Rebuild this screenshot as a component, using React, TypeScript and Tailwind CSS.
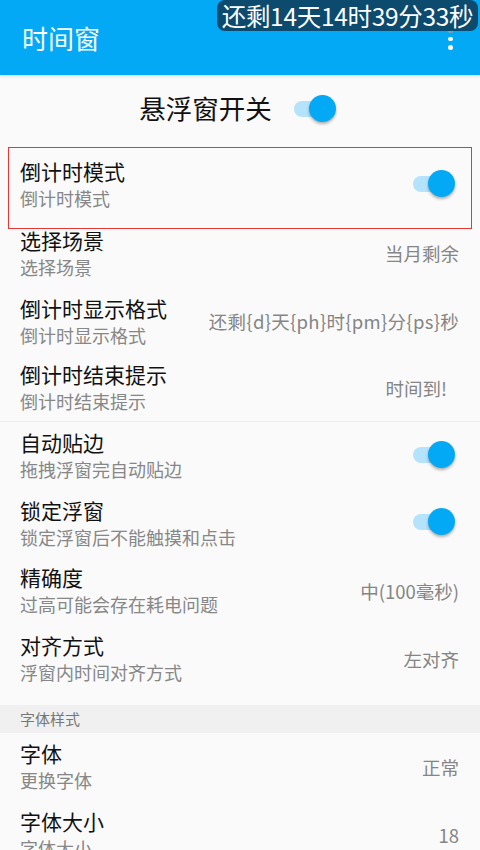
import React from "react";

const FONT = { fontFamily: '"Noto Sans CJK SC", "Noto Sans", sans-serif' };

function Switch({ className = "" }: { className?: string }) {
  return (
    <div className={`relative w-[42px] h-[27px] shrink-0 ${className}`}>
      <div className="absolute left-0 top-[6px] w-[38px] h-[16px] rounded-full bg-[#b5e3fb]" />
      <div className="absolute right-0 top-0 w-[27px] h-[27px] rounded-full bg-[#03a9f4] shadow-[0_2px_3px_rgba(0,0,0,0.3)]" />
    </div>
  );
}

function Row({
  title,
  sub,
  value,
  sw,
  h,
  valueClass = "",
  children,
}: {
  title: string;
  sub: string;
  value?: string;
  sw?: boolean;
  h: string;
  valueClass?: string;
  children?: React.ReactNode;
}) {
  return (
    <div className={`relative flex items-center ${h} pl-[20px] ${sw ? "pr-[25px]" : "pr-[21px]"}`}>
      <div className="flex flex-col flex-1 min-w-0">
        <div className="text-[21px] leading-[27px] text-[#111111] whitespace-nowrap">{title}</div>
        <div className="text-[18px] leading-[27px] text-[#878787] whitespace-nowrap">{sub}</div>
      </div>
      {value !== undefined && (
        <div className={`text-[18.5px] leading-[27px] text-[#858585] whitespace-nowrap ${valueClass}`}>{value}</div>
      )}
      {sw && <Switch className="top-[-2px]" />}
      {children}
    </div>
  );
}

export default function App() {
  return (
    <div className="relative w-[480px] h-[850px] overflow-hidden bg-[#fafafa]" style={FONT}>
      {/* App bar */}
      <div className="relative h-[75px] bg-[#03a9f4] flex items-center pl-[22px] shadow-[0_1px_3px_rgba(0,0,0,0.15)]">
        <div className="text-white text-[26px] leading-[34px]">时间窗</div>
        <div className="absolute left-[448px] top-[28px] flex flex-col gap-[4px]">
          <div className="w-[4.5px] h-[4.5px] rounded-full bg-[#9a9a9a]" />
          <div className="w-[4.5px] h-[4.5px] rounded-full bg-white" />
          <div className="w-[4.5px] h-[4.5px] rounded-full bg-white" />
        </div>
      </div>

      {/* Floating badge */}
      <div className="absolute left-[217px] top-0 w-[261px] h-[31px] rounded-[8px] bg-[#0c4a6e] flex items-center justify-center">
        <span className="text-white text-[24.5px] leading-[31px] whitespace-nowrap tracking-[-0.3px]">还剩14天14时39分33秒</span>
      </div>

      {/* Header switch */}
      <div className="h-[66px] mb-[10px] flex items-center justify-center gap-[22px] pr-[5px]">
        <div className="text-[26.5px] leading-[34px] text-[#111111]">悬浮窗开关</div>
        <Switch />
      </div>

      <Row h="h-[68px]" title="倒计时模式" sub="倒计时模式" sw>
        <div className="absolute left-[8px] right-[8px] top-[-4px] bottom-[-10px] border border-[#e53935] pointer-events-none" />
      </Row>
      <Row h="h-[69px]" title="选择场景" sub="选择场景" value="当月剩余" />
      <Row h="h-[67px]" title="倒计时显示格式" sub="倒计时显示格式" value="还剩{d}天{ph}时{pm}分{ps}秒" valueClass="tracking-[0.3px]" />
      <Row h="h-[66px]" title="倒计时结束提示" sub="倒计时结束提示" value="时间到!" valueClass="pr-[12px]" />

      <div className="h-px bg-[#ececec]" />

      <Row h="h-[68px]" title="自动贴边" sub="拖拽浮窗完自动贴边" sw />
      <Row h="h-[67px]" title="锁定浮窗" sub="锁定浮窗后不能触摸和点击" sw />
      <Row h="h-[68px]" title="精确度" sub="过高可能会存在耗电问题" value="中(100毫秒)" />
      <Row h="h-[68px]" title="对齐方式" sub="浮窗内时间对齐方式" value="左对齐" />

      <div className="mt-[12px] h-[28px] bg-[#f0f0f0] flex items-center pl-[20px]">
        <span className="text-[15px] leading-[20px] text-[#777777]">字体样式</span>
      </div>

      <Row h="h-[68px]" title="字体" sub="更换字体" value="正常" />
      <Row h="h-[68px]" title="字体大小" sub="字体大小" value="18" />
    </div>
  );
}
